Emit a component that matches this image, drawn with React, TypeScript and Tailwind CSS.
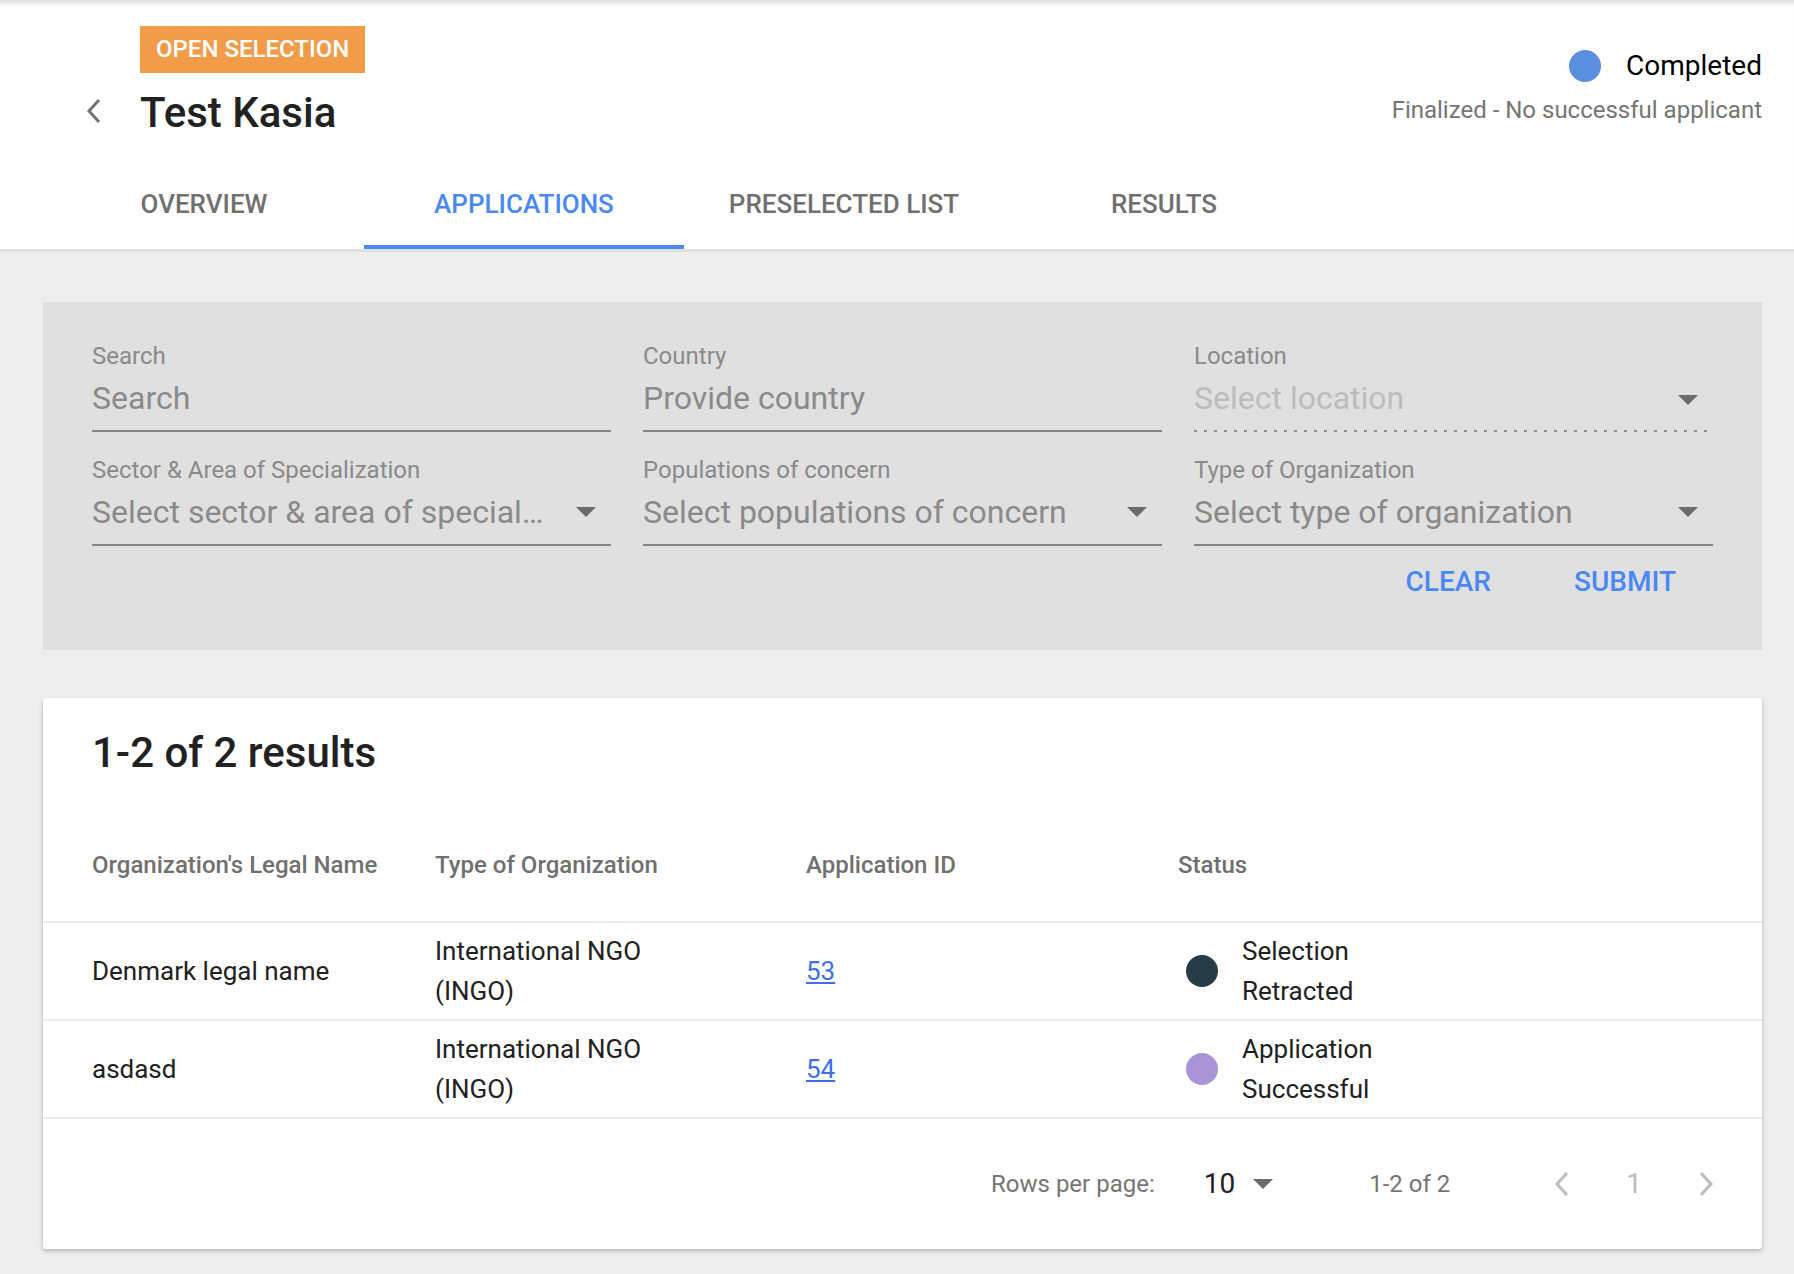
import React from "react";

type Row = {
  name: string;
  type: string;
  id: string;
  status: string;
  dot: string;
};

const rows: Row[] = [
  {
    name: "Denmark legal name",
    type: "International NGO (INGO)",
    id: "53",
    status: "Selection Retracted",
    dot: "bg-[#263c47]",
  },
  {
    name: "asdasd",
    type: "International NGO (INGO)",
    id: "54",
    status: "Application Successful",
    dot: "bg-[#a994d7]",
  },
];

const tabs = ["OVERVIEW", "APPLICATIONS", "PRESELECTED LIST", "RESULTS"];

function Caret({ className = "" }: { className?: string }) {
  return (
    <svg width="20" height="10" viewBox="0 0 20 10" className={className}>
      <path d="M0 0 L20 0 L10 10 Z" fill="#6b6b6b" />
    </svg>
  );
}

function Chevron({ dir, color }: { dir: "left" | "right"; color: string }) {
  return (
    <svg width="16" height="26" viewBox="0 0 16 26">
      <path
        d={dir === "left" ? "M13 2 L3 13 L13 24" : "M3 2 L13 13 L3 24"}
        fill="none"
        stroke={color}
        strokeWidth="3"
      />
    </svg>
  );
}

function Field({
  label,
  value,
  select,
  faded,
  dotted,
}: {
  label: string;
  value: string;
  select?: boolean;
  faded?: boolean;
  dotted?: boolean;
}) {
  return (
    <div className="flex flex-col">
      <div className="text-[24px] leading-[28px] text-[#8a8a8a]">{label}</div>
      <div className="mt-[8px] flex items-center pb-[12px]">
        <span
          className={`flex-1 min-w-0 truncate text-[32px] leading-[40px] ${
            faded ? "text-[#bcbcbc]" : "text-[#8a8a8a]"
          }`}
        >
          {value}
        </span>
        {select && <Caret className={`ml-[30px] ${dotted ? "mr-[15px] mt-[4px]" : "mr-[15px]"}`} />}
      </div>
      {dotted ? (
        <div className="h-[2px] mr-[5px] bg-[linear-gradient(to_right,#8c8c8c_3px,transparent_3px)] bg-[length:10px_2px] bg-repeat-x" />
      ) : (
        <div className="h-[2px] bg-[#868686]" />
      )}
    </div>
  );
}

export default function App() {
  return (
    <div className="min-h-screen bg-[#eeeeee] font-['Roboto',sans-serif] pb-[25px]">
      {/* header */}
      <div className="bg-white border-b-[3px] border-[#e0e0e0] shadow-[inset_0_7px_6px_-5px_rgba(0,0,0,0.18)]">
        <div className="flex justify-between pr-[32px]">
          <div className="flex pt-[26px]">
            <div className="w-[140px] flex justify-end pr-[38px] pt-[72px]">
              <Chevron dir="left" color="#757575" />
            </div>
            <div className="flex flex-col items-start">
              <span className="bg-[#f29c4a] text-white text-[24px] leading-[47px] font-medium px-[16px]">
                OPEN SELECTION
              </span>
              <h1 className="mt-[15px] text-[42px] leading-[50px] font-medium text-[#212121]">
                Test Kasia
              </h1>
            </div>
          </div>
          <div className="flex flex-col items-end pt-[46px]">
            <div className="flex items-center gap-[25px]">
              <span className="w-[32px] h-[32px] rounded-full bg-[#5b8fe0]" />
              <span className="text-[28px] leading-[40px] text-black">Completed</span>
            </div>
            <div className="mt-[8px] text-[24px] leading-[32px] text-[#757575]">
              Finalized - No successful applicant
            </div>
          </div>
        </div>
        <div className="flex pl-[44px] mt-[21px]">
          {tabs.map((t, i) => (
            <div
              key={t}
              className={`w-[320px] h-[90px] pt-[4px] flex items-center justify-center text-[26px] font-medium border-b-4 ${
                i === 1 ? "text-[#4a89f3] border-[#4a89f3]" : "text-[#707070] border-transparent"
              }`}
            >
              {t}
            </div>
          ))}
        </div>
      </div>

      {/* filters */}
      <div className="mt-[50px] ml-[43px] mr-[32px] bg-[#e0e0e0] px-[49px] pt-[40px] pb-[48px]">
        <div className="grid grid-cols-3 gap-x-[32px] gap-y-[24px]">
          <Field label="Search" value="Search" />
          <Field label="Country" value="Provide country" />
          <Field label="Location" value="Select location" select faded dotted />
          <Field
            label="Sector & Area of Specialization"
            value="Select sector & area of specialization"
            select
          />
          <Field label="Populations of concern" value="Select populations of concern" select />
          <Field label="Type of Organization" value="Select type of organization" select />
        </div>
        <div className="mt-[16px] flex justify-end gap-[83px] pr-[37px] text-[28px] leading-[40px] font-medium text-[#4a89f3]">
          <button>CLEAR</button>
          <button>SUBMIT</button>
        </div>
      </div>

      {/* results */}
      <div className="mt-[48px] ml-[43px] mr-[32px] bg-white rounded-[3px] shadow-[0_2px_4px_rgba(0,0,0,0.25)]">
        <h2 className="pl-[49px] pt-[30px] text-[42px] leading-[50px] font-medium text-[#212121]">
          1-2 of 2 results
        </h2>
        <div className="mt-[31px] h-[114px] grid grid-cols-[343px_371px_372px_1fr] items-center pl-[49px] border-b-2 border-[#ececec] text-[24px] font-medium text-[#707070]">
          <div>Organization's Legal Name</div>
          <div>Type of Organization</div>
          <div>Application ID</div>
          <div>Status</div>
        </div>
        {rows.map((r) => (
          <div
            key={r.id}
            className="h-[98px] grid grid-cols-[343px_371px_372px_1fr] items-center pl-[49px] border-b-2 border-[#ececec] text-[26px] leading-[40px] text-[#212121]"
          >
            <div>{r.name}</div>
            <div className="max-w-[240px]">{r.type}</div>
            <div>
              <a href="#" className="text-[#3f6fe8] underline">
                {r.id}
              </a>
            </div>
            <div className="flex items-center pl-[8px]">
              <span className={`w-[32px] h-[32px] rounded-full shrink-0 ${r.dot}`} />
              <span className="ml-[24px] max-w-[170px]">{r.status}</span>
            </div>
          </div>
        ))}
        <div className="h-[130px] flex items-center justify-end pr-[48px] text-[24px]">
          <span className="text-[#757575]">Rows per page:</span>
          <span className="ml-[49px] text-[28px] text-[#212121]">10</span>
          <Caret className="ml-[18px]" />
          <span className="ml-[96px] text-[#757575]">1-2 of 2</span>
          <span className="ml-[104px] flex">
            <Chevron dir="left" color="#bdbdbd" />
          </span>
          <span className="ml-[56px] text-[28px] text-[#bdbdbd]">1</span>
          <span className="ml-[56px] flex">
            <Chevron dir="right" color="#bdbdbd" />
          </span>
        </div>
      </div>
    </div>
  );
}
